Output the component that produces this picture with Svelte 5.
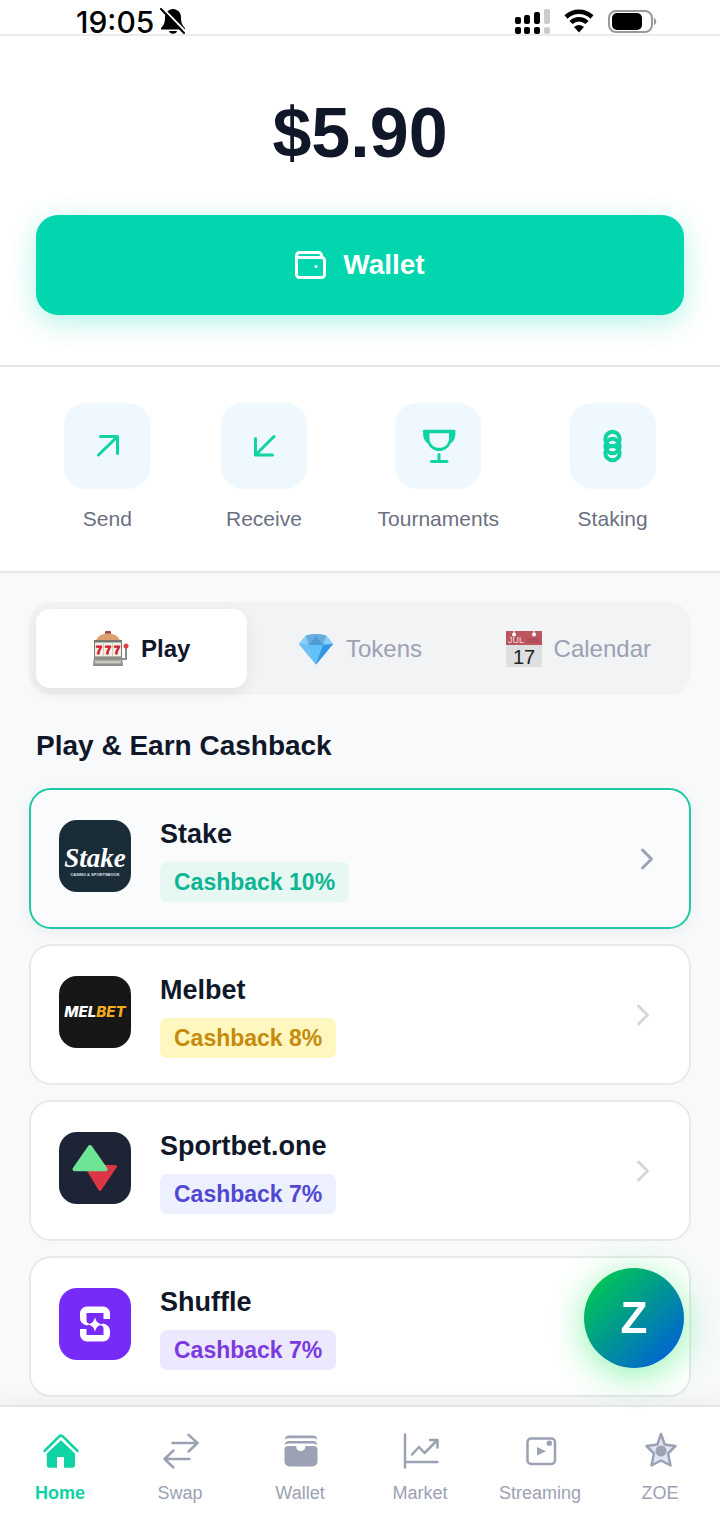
<script lang="ts">
  interface Offer {
    name: string;
    cashback: number;
    tone: string;
    logo: string;
  }

  const actions = [
    { label: "Send", icon: "send" },
    { label: "Receive", icon: "receive" },
    { label: "Tournaments", icon: "trophy" },
    { label: "Staking", icon: "coins" },
  ];

  const tabs = ["Play", "Tokens", "Calendar"];

  const offers: Offer[] = [
    { name: "Stake", cashback: 10, tone: "green", logo: "stake" },
    { name: "Melbet", cashback: 8, tone: "yellow", logo: "melbet" },
    { name: "Sportbet.one", cashback: 7, tone: "indigo", logo: "sportbet" },
    { name: "Shuffle", cashback: 7, tone: "purple", logo: "shuffle" },
  ];

  const navItems = ["Home", "Swap", "Wallet", "Market", "Streaming", "ZOE"];

  let activeTab = $state("Play");
  let activeOffer = $state("Stake");
  let activeNav = $state("Home");
</script>

{#snippet actionIcon(name: string)}
  <svg class="icon" viewBox="0 0 36 36" aria-hidden="true">
    {#if name === "send"}
      <path d="M9.5 27 28 9M11.5 8.5H28.5V25.5" />
    {:else if name === "receive"}
      <path d="M28 8.5 9.5 27M9.5 10.5V27H26.5" />
    {:else if name === "trophy"}
      <path
        class="solid"
        fill-rule="evenodd"
        d="M4 1.800h30c1 0 1.500.6 1.500 1.600 0 6.200-1.300 9.800-5 12C28.500 20 24 23 19.200 23S10 20 8 15.400C4.300 13.200 3 9.600 3 3.400 3 2.400 3 1.800 4 1.800zM9.500 5.200v5c0 5.600 4 9.600 9.700 9.600s9.800-4 9.800-9.600v-5z"
      />
      <path d="M19 26.500V33M11.500 33.500h15.500" />
    {:else}
      <g class="coins">
        <circle cx="17.500" cy="11" r="7.200" />
        <circle cx="17.500" cy="18" r="7.200" />
        <circle cx="17.500" cy="25" r="7.200" />
      </g>
    {/if}
  </svg>
{/snippet}

{#snippet tabIcon(name: string)}
  <svg class="icon" viewBox="0 0 36 36" aria-hidden="true">
    {#if name === "Play"}
      <rect x="12" y="0" width="6" height="4" rx="1" fill="#a8483c" />
      <path d="M3 10C4 5 9 2.500 15 2.500S26 5 27 10z" fill="#dd9f70" />
      <path d="M1 9h28v18H1z" fill="#77776f" />
      <rect x="2" y="11.500" width="26" height="14" fill="#f4f1e8" />
      <path d="M10.500 12v13M19.500 12v13" stroke="#cfcbc0" />
      <path d="M1 26h28l1 9H0z" fill="#8f9088" />
      <path d="M2 31h26" stroke="#c9c9c2" stroke-width="3" />
      <path d="M29 28h4V17" fill="none" stroke="#8b8b88" stroke-width="2" />
      <circle cx="33" cy="15" r="2.500" fill="#e0404a" />
      <text class="reel" x="3" y="23">7</text>
      <text class="reel" x="12" y="23">7</text>
      <text class="reel" x="21" y="23">7</text>
    {:else if name === "Tokens"}
      <path d="M8 4.500Q18 1.500 28 4.500L35 13 18 33.500 1 13z" fill="#3fa9ef" />
      <path d="M8 4.500 1 13l10 1zM28 4.500l7 8.500-10 1z" fill="#85d0fa" />
      <path d="M8 4.500Q18 1.500 28 4.500L25 14H11z" fill="#6aaddb" />
      <path d="m18 5-7 9h14z" fill="#4d9bd6" />
      <path d="M1 13l10 1 7 19.500z" fill="#6fc3f8" />
      <path d="M11 14h14l-7 19.500z" fill="#62c0fb" />
      <path d="M25 14l10-1-17 20.500z" fill="#3597e2" />
    {:else}
      <path d="M0 0h36v36H0z" fill="#dedfdf" />
      <path d="M0 0h36v14H0z" fill="#bb5560" />
      <path d="M8 0v3M28 0v3" stroke="#fff" />
      <circle cx="8" cy="3.500" r="2" fill="#fff" />
      <circle cx="28" cy="3.500" r="2" fill="#fff" />
      <text class="month" x="2" y="12">JUL</text>
      <path d="M21 9.500h12" stroke="#ad4c56" stroke-width="4" />
      <text class="day" x="18" y="33">17</text>
    {/if}
  </svg>
{/snippet}

{#snippet logo(name: string)}
  <svg class="logo" viewBox="0 0 72 72" aria-hidden="true">
    {#if name === "stake"}
      <rect width="72" height="72" rx="18" fill="#1a2c38" />
      <text class="stake" x="36" y="47">Stake</text>
      <text class="stake-sub" x="36" y="56">CASINO &amp; SPORTSBOOK</text>
    {:else if name === "melbet"}
      <rect width="72" height="72" rx="18" fill="#171717" />
      <text class="melbet" x="36" y="41">MEL<tspan fill="#f3ae1c">BET</tspan></text>
    {:else if name === "sportbet"}
      <rect width="72" height="72" rx="18" fill="#1c2436" />
      <path
        d="M27 34.500h29.500L41 57.500z"
        fill="#dc3545"
        stroke="#dc3545"
        stroke-width="3"
        stroke-linejoin="round"
      />
      <path
        d="M31 15 15.500 37.200h31z"
        fill="#6ee595"
        stroke="#6ee595"
        stroke-width="4"
        stroke-linejoin="round"
      />
    {:else}
      <rect width="72" height="72" rx="18" fill="#762bf9" />
      <path
        d="M28 18.500h16a7 7 0 0 1 7 7V31h-6.500v-6H27.500v8c.5 1.800 1.500 2.500 3.500 3l-3 1.500C23.500 36.500 21 33.500 21 30v-4.500a7 7 0 0 1 7-7z"
        fill="#fff"
      />
      <path
        d="M44 35.500c4.500 1 7 4 7 7.500v3.500a7 7 0 0 1-7 7H28a7 7 0 0 1-7-7V41h6.500v6h17v-7c-.5-1.800-1.500-2.500-3.500-3z"
        fill="#fff"
      />
      <path
        d="M36 29c1 4.500 2.500 6 7 7.500-4.500 1-6 3-7 7.500-1-4.500-2.500-6.500-7-7.500 4.500-1.500 6-3 7-7.500z"
        fill="#fff"
      />
    {/if}
  </svg>
{/snippet}

{#snippet navIcon(name: string)}
  <svg class="icon" viewBox="0 0 36 36" aria-hidden="true">
    {#if name === "Home"}
      <path d="M2.500 18 17.500 3.200q1.500-1.200 3 0L35.500 18" />
      <path
        class="solid"
        d="M19 7.300 33 20.500V32a2.700 2.700 0 0 1-2.700 2.700H22V24h-7v10.700H7.500A2.700 2.700 0 0 1 4.800 32V20.500z"
      />
    {:else if name === "Swap"}
      <path d="M10.500 10H35.500M26.500 1.800 35.500 10 26.500 18.500M27.500 26H2.500M11.500 17.500 2.500 26 11.500 34.500" />
    {:else if name === "Wallet"}
      <path
        class="solid"
        d="M5.500 13H13q1.500 0 1.500 1.500c0 2 1.500 3.500 4.200 3.500s4.300-1.500 4.300-3.500Q23 13 24.500 13H32a3.500 3.500 0 0 1 3.500 3.500v12a5 5 0 0 1-5 5H7.500a5 5 0 0 1-5-5v-12A3.500 3.500 0 0 1 5.500 13z"
      />
      <path
        class="solid"
        d="M2.500 6.500C3 4 4.500 2.500 7 2.500h24c2.500 0 4 1.500 4.500 4Q34 5.200 31 5.200H7Q4 5.200 2.500 6.500zM2.500 12C3 9.500 4.500 8 7 8h24c2.500 0 4 1.500 4.500 4Q34 10.500 31 10.500H7Q4 10.500 2.500 12z"
      />
    {:else if name === "Market"}
      <path d="M3 1.500V34.500M3 29H35.500M10 21.500 17 14 22.500 20 35 7.500M28 7H35.500V14.500" />
    {:else if name === "Streaming"}
      <rect x="5.500" y="5.500" width="27.500" height="25.500" rx="3.500" />
      <path class="solid" d="M15 14v8.500l9-4.250z" />
      <circle class="solid" cx="27.300" cy="10.300" r="2.700" />
    {:else}
      <path
        class="tinted"
        d="M19 1 22.700 11.500 33.500 13 26 20.500 28.500 32.500 19 27.500 9.500 32.500 12 20.500 4.500 13 15.300 11.500z"
      />
      <circle class="solid" cx="19" cy="18" r="5.500" />
    {/if}
  </svg>
{/snippet}

<div class="app">
  <header class="status-bar">
    <div class="clock">
      <span>19:05</span>
      <svg width="26" height="26" viewBox="0 0 26 26" aria-hidden="true">
        <path d="M13 1c5.500.5 8 4 8 8.500 0 5 1 7.500 4 10.500v1.500H1V20c3-3 4-5.500 4-10.500C5 5 8 1.500 13 1zM9 23h8c-.5 3.500-7.500 3.500-8 0z" />
        <path d="M3 .5 26 24" stroke="#fff" stroke-width="2" />
        <path d="M1 1 24 25" stroke="#000" stroke-width="2" stroke-linecap="round" />
      </svg>
    </div>
    <div class="indicators">
      <svg width="36" height="26" viewBox="0 0 36 26" aria-hidden="true">
        <rect x="1" y="9" width="6" height="7" rx="2" />
        <rect x="10" y="7" width="6" height="9" rx="2" />
        <rect x="20" y="4" width="6" height="12" rx="2" />
        <rect x="30" y="1" width="6" height="15" rx="2" fill="#ccc" />
        <rect x="1" y="19" width="6" height="7" rx="2" />
        <rect x="10" y="19" width="6" height="7" rx="2" />
        <rect x="20" y="19" width="6" height="7" rx="2" />
        <rect x="30" y="19" width="6" height="7" rx="2" fill="#ccc" />
      </svg>
      <svg width="30" height="26" viewBox="0 0 30 26" aria-hidden="true">
        <path
          d="M2 9c7.500-7 18.500-7 26 0M7 14.500c4.500-4.500 11.500-4.500 16 0"
          fill="none"
          stroke="#000"
          stroke-width="4.500"
        />
        <path d="M10 19q5-4 10 0l-5 5.500z" />
      </svg>
      <svg width="50" height="26" viewBox="0 0 50 26" aria-hidden="true">
        <rect x="1" y="3" width="43" height="21" rx="7" fill="none" stroke="#999" stroke-width="2" />
        <rect x="4" y="5" width="30" height="17" rx="5" />
        <path d="M46 10c3 1 3 6 0 7z" fill="#999" />
      </svg>
    </div>
  </header>

  <section class="balance">
    <div class="amount">$5.90</div>
    <button class="wallet-button" type="button">
      <svg width="31" height="28" viewBox="0 0 31 28" aria-hidden="true">
        <path d="M1.500 7V4.500a3 3 0 0 1 3-3h19a3 3 0 0 1 3 3v2M1.500 6.500h25a3 3 0 0 1 3 3v14a3 3 0 0 1-3 3h-22a3 3 0 0 1-3-3z" />
        <circle cx="21" cy="15.500" r="1.500" />
      </svg>
      Wallet
    </button>
  </section>

  <section class="actions">
    {#each actions as action}
      <button class="action" type="button">
        <span class="action-tile">{@render actionIcon(action.icon)}</span>
        <span>{action.label}</span>
      </button>
    {/each}
  </section>

  <main>
    <div class="tabs" role="tablist">
      {#each tabs as tab}
        <button
          class="tab"
          class:active={activeTab === tab}
          type="button"
          role="tab"
          aria-selected={activeTab === tab}
          onclick={() => (activeTab = tab)}
        >
          {@render tabIcon(tab)}
          <span>{tab}</span>
        </button>
      {/each}
    </div>

    <h2>Play &amp; Earn Cashback</h2>

    <div class="offers">
      {#each offers as offer}
        <a
          class="offer"
          class:active={activeOffer === offer.name}
          href="#{offer.logo}"
          onclick={() => (activeOffer = offer.name)}
        >
          {@render logo(offer.logo)}
          <span class="offer-info">
            <span class="offer-name">{offer.name}</span>
            <span class="badge {offer.tone}">Cashback {offer.cashback}%</span>
          </span>
          <svg class="chevron" viewBox="0 0 36 36" aria-hidden="true">
            <path d="m13.500 9 9 9-9 9" />
          </svg>
        </a>
      {/each}
    </div>
  </main>

  <button class="fab" type="button">Z</button>

  <nav>
    {#each navItems as item}
      <a
        class="nav-item"
        class:active={activeNav === item}
        href="#{item.toLowerCase()}"
        onclick={() => (activeNav = item)}
      >
        {@render navIcon(item)}
        <span>{item}</span>
      </a>
    {/each}
  </nav>
</div>

<style>
  :global(body) {
    margin: 0;
    background: #f8f9fb;
  }
  .app {
    display: flex;
    flex-direction: column;
    min-height: 100vh;
    font-family: "Liberation Sans", Arial, sans-serif;
    color: #0f1729;
  }
  button {
    border: none;
    padding: 0;
    background: none;
    font-family: inherit;
    color: inherit;
    cursor: pointer;
  }
  a {
    color: inherit;
    text-decoration: none;
  }
  svg {
    flex-shrink: 0;
  }
  .icon {
    width: 36px;
    height: 36px;
    overflow: visible;
  }

  .status-bar {
    display: flex;
    justify-content: space-between;
    align-items: flex-end;
    height: 34px;
    padding: 0 62px 0 76px;
    background: #fff;
    border-bottom: 2px solid #ebebeb;
    color: #000;
  }
  .clock,
  .indicators {
    display: flex;
    align-items: flex-end;
  }
  .clock {
    gap: 6px;
    font: 500 30px/24px Inter, sans-serif;
  }
  .indicators {
    gap: 14px;
  }

  .balance {
    display: flex;
    flex-direction: column;
    gap: 46px;
    padding: 61px 36px 50px;
    background: #fff;
    border-bottom: 2px solid #e5e6e8;
  }
  .amount {
    font-size: 70px;
    line-height: 72px;
    font-weight: 700;
    text-align: center;
  }
  .wallet-button {
    display: flex;
    align-items: center;
    justify-content: center;
    gap: 17px;
    height: 100px;
    border-radius: 22px;
    background: #02d6ae;
    box-shadow: 0 7px 28px rgba(2, 214, 174, 0.3);
    color: #fff;
    font-size: 28px;
    font-weight: 700;
  }
  .wallet-button path {
    fill: none;
    stroke: #fff;
    stroke-width: 3;
  }
  .wallet-button circle {
    fill: #fff;
  }

  .actions {
    display: flex;
    justify-content: space-around;
    padding: 36px 29px 39px;
    background: #fff;
    border-bottom: 2px solid #e5e6e8;
  }
  .action {
    display: flex;
    flex-direction: column;
    align-items: center;
    gap: 17px;
    color: #6b7080;
    font-size: 21px;
    line-height: 26px;
  }
  .action-tile {
    display: flex;
    align-items: center;
    justify-content: center;
    width: 86px;
    height: 86px;
    border-radius: 22px;
    background: #eff8ff;
  }
  .action-tile .icon {
    fill: none;
    stroke: #10d3a3;
    stroke-width: 3;
    stroke-linecap: round;
    stroke-linejoin: round;
  }
  .action-tile .coins {
    stroke-width: 4;
  }
  .action-tile .solid {
    fill: #10d3a3;
    stroke: none;
  }

  main {
    flex: 1;
    padding: 29px 29px 8px;
  }
  .tabs {
    display: grid;
    grid-template-columns: repeat(3, 1fr);
    gap: 7px;
    padding: 7px;
    border-radius: 22px;
    background: #f1f3f4;
  }
  .tab {
    display: flex;
    align-items: center;
    justify-content: center;
    gap: 12px;
    height: 79px;
    border-radius: 14px;
    color: #9ca1b3;
    font-size: 24px;
  }
  .tab.active {
    background: #fff;
    box-shadow: 0 4px 14px rgba(0, 0, 0, 0.08);
    color: #0f1729;
    font-weight: 700;
  }
  .reel {
    font: 700 11px "Liberation Sans", sans-serif;
    fill: #d6202c;
    stroke: #d6202c;
  }
  .month {
    font: 9px "Liberation Sans", sans-serif;
    fill: #f1d5d7;
  }
  .day {
    font: 20px "Liberation Sans", sans-serif;
    fill: #222;
    text-anchor: middle;
  }

  h2 {
    margin: 33px 7px 24px;
    font-size: 28px;
    line-height: 36px;
    font-weight: 700;
  }

  .offers {
    display: flex;
    flex-direction: column;
    gap: 15px;
  }
  .offer {
    display: flex;
    align-items: center;
    gap: 29px;
    padding: 26px 28px 25px;
    border: 2px solid #e7e9eb;
    border-radius: 22px;
    background: #fff;
  }
  .offer.active {
    border-color: #1dcaa4;
    background: #fafbfc;
    box-shadow: 0 4px 16px rgba(0, 0, 0, 0.05);
  }
  .logo {
    width: 72px;
    height: 72px;
    margin-bottom: 7px;
  }
  .stake {
    font: italic 700 27px "Liberation Serif", serif;
    fill: #fff;
    text-anchor: middle;
  }
  .stake-sub {
    font: 700 4px "Liberation Sans", sans-serif;
    fill: #dfe5e8;
    text-anchor: middle;
  }
  .melbet {
    font: italic 800 15px Inter, sans-serif;
    fill: #fff;
    text-anchor: middle;
  }
  .offer-info {
    display: flex;
    flex: 1;
    flex-direction: column;
    align-items: flex-start;
    gap: 10px;
    font-weight: 700;
  }
  .offer-name {
    font-size: 27px;
    line-height: 36px;
  }
  .badge {
    padding: 0 14px;
    border-radius: 7px;
    font-size: 23px;
    line-height: 40px;
  }
  .green {
    background: #e7f8f3;
    color: #0eb592;
  }
  .yellow {
    background: #fef7c0;
    color: #c68a0c;
  }
  .indigo {
    background: #edf0fe;
    color: #5148d2;
  }
  .purple {
    background: #ece8fe;
    color: #7b3adf;
  }
  .chevron {
    width: 36px;
    height: 36px;
    fill: none;
    stroke: #d5d7dc;
    stroke-width: 3;
    stroke-linecap: round;
    stroke-linejoin: round;
  }
  .offer.active .chevron {
    margin-right: -4px;
    stroke: #9ca1b3;
  }

  .fab {
    position: fixed;
    right: 36px;
    bottom: 161px;
    z-index: 1;
    width: 100px;
    height: 100px;
    border-radius: 50%;
    background: linear-gradient(135deg, #00c853 10%, #0062d6 90%);
    box-shadow: 0 7px 36px rgba(0, 230, 70, 0.45);
    color: #fff;
    font-size: 44px;
    font-weight: 700;
  }

  nav {
    position: sticky;
    bottom: 0;
    display: grid;
    grid-template-columns: repeat(6, 1fr);
    padding: 26px 0 25px;
    border-top: 2px solid #e5e6e8;
    background: #fff;
    box-shadow: 0 -4px 20px rgba(0, 0, 0, 0.05);
  }
  .nav-item {
    display: flex;
    flex-direction: column;
    align-items: center;
    gap: 12px;
    color: #9ca1b3;
    font-size: 18px;
    line-height: 24px;
  }
  .nav-item.active {
    color: #10d3a3;
    font-weight: 700;
  }
  .nav-item .icon {
    fill: none;
    stroke: currentColor;
    stroke-width: 2.5;
    stroke-linecap: round;
    stroke-linejoin: round;
  }
  .nav-item .solid {
    fill: currentColor;
    stroke: none;
  }
  .nav-item .tinted {
    fill: #dfe5f5;
  }
</style>
